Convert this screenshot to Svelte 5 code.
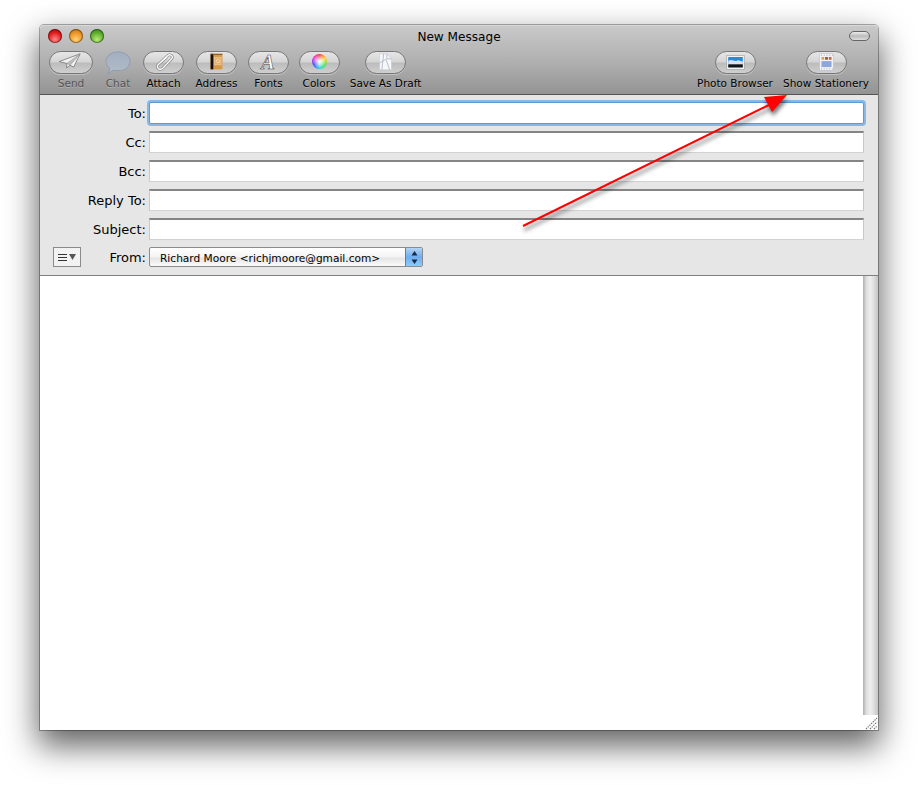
<script>
  const left = [
    { id: 'send', label: 'Send', w: 44, off: true },
    { id: 'chat', label: 'Chat', w: 50, off: true },
    { id: 'attach', label: 'Attach', w: 41 },
    { id: 'address', label: 'Address', w: 65 },
    { id: 'fonts', label: 'Fonts', w: 39 },
    { id: 'colors', label: 'Colors', w: 62 },
    { id: 'draft', label: 'Save As Draft', w: 71 }
  ];
  const right = [
    { id: 'photo', label: 'Photo Browser', w: 78 },
    { id: 'stationery', label: 'Show Stationery', w: 88 }
  ];
  const fields = [
    { label: 'To:', focus: true },
    { label: 'Cc:' },
    { label: 'Bcc:' },
    { label: 'Reply To:' },
    { label: 'Subject:' }
  ];
  const dotsX = [2, 5, 8, 11, 14];
</script>

{#snippet icon(id)}
  {#if id === 'send'}
    <svg class="ico" viewBox="0 0 44 23"><path d="M32 2 L9 10.5 L17.5 12.5 L17 17.5 L21 14.5 L25 16.5 Z" fill="#f1f1f1" stroke="#777" stroke-width=".9" stroke-linejoin="round"/><path d="M32 2 L17.5 12.5 L21 14.5 Z" fill="#bdbdbd" stroke="#8a8a8a" stroke-width=".5"/></svg>
  {:else if id === 'attach'}
    <svg class="ico" viewBox="0 0 41 23"><path d="M16 12.5 L25 4 C27.500 1.500 32 4.500 29.500 7.500 L20 17.500 C17 20.500 12 18 14.500 14 L24 6" fill="none" stroke="#777" stroke-width="2.800"/><path d="M16 12.5 L25 4 C27.500 1.500 32 4.500 29.500 7.500 L20 17.500 C17 20.500 12 18 14.500 14 L24 6" fill="none" stroke="#f8f8f8" stroke-width="1.600"/></svg>
  {:else if id === 'address'}
    <svg class="ico" viewBox="0 0 41 23"><rect x="14" y="2" width="13" height="17" fill="#d89a45"/><rect x="14" y="2" width="3" height="17" fill="#17100a"/><rect x="14" y="2" width="13" height="1" fill="#7a4a1c"/><rect x="18.500" y="6" width="7" height="8" fill="#e6b070" stroke="#f0cfa0" stroke-width=".7"/><circle cx="22" cy="10" r="1.800" fill="none" stroke="#fbe6c8" stroke-width=".7"/></svg>
  {:else if id === 'fonts'}
    <svg class="ico" viewBox="0 0 41 23"><text x="20" y="18.500" class="bigA">A</text></svg>
  {:else if id === 'colors'}
    <div class="wheel"></div>
  {:else if id === 'draft'}
    <svg class="ico" viewBox="0 0 41 23"><path d="M14 2 H22 L27 7.500 V19.500 H14 Z" fill="#f5f7fb" stroke="#c0c3cc" stroke-width=".5"/><path d="M22 2 V7.500 H27 M14 12 L21 8 L25 19.500 M18.500 2 L16.500 19.500" fill="none" stroke="#9aa2b2" stroke-width=".7"/></svg>
  {:else if id === 'photo'}
    <svg class="ico" viewBox="0 0 41 23"><rect x="11" y="4" width="19" height="15" fill="#f4f4f4" stroke="#8a8a8a" stroke-width=".5"/><rect x="12.500" y="5.500" width="16" height="8" fill="#1f8ce0"/><path d="M12.500 10 C16 7 19 11 22 9.500 C25 8 26 11 28.500 10 V14 H12.500 Z" fill="#e6dde2"/><rect x="12.500" y="13.500" width="16" height="3.500" fill="#10131a"/></svg>
  {:else if id === 'stationery'}
    <svg class="ico" viewBox="0 0 41 23"><g transform="translate(13 2)"><rect x="0" y="0" width="15" height="18" fill="#f1f2f6" stroke="#b8bac2" stroke-width=".5"/>{#each dotsX as x}<rect x={x - 0.5} y="1" width="1" height="1" fill="#9aa0b0"/><rect x={x - 0.5} y="16" width="1" height="1" fill="#9aa0b0"/>{/each}<rect x="2" y="3.500" width="3" height="3" fill="#e0a050"/><rect x="6" y="3.500" width="3" height="3" fill="#8a5a3a"/><rect x="10" y="3.500" width="3" height="3" fill="#c0683c"/><rect x="2" y="8" width="11" height="6.500" fill="#8fa6dc"/></g></svg>
  {/if}
{/snippet}

{#snippet tool(item)}
  <div class="tool" class:off={item.off} style="width:{item.w}px">
    {#if item.id === 'chat'}
      <svg class="bubble" viewBox="0 0 28 24">
        <defs><linearGradient id="bub" x1="0" y1="0" x2="0" y2="1"><stop offset="0" stop-color="#a2afc0"/><stop offset="1" stop-color="#b2bcc9"/></linearGradient></defs>
        <path d="M14 1 C21 1 26.500 5 26.500 11 C26.500 17 21 20.500 14 20.500 C12 20.500 10.500 20.500 9 20 L4 23.500 L5.500 18 C3 16 1.500 13.500 1.500 11 C1.500 5 7 1 14 1 Z" fill="url(#bub)" stroke="#8d9bb0" stroke-width="1"/>
      </svg>
    {:else}
      <div class="pill" class:wide={item.id === 'send'}>
        {@render icon(item.id)}
      </div>
    {/if}
    <span>{item.label}</span>
  </div>
{/snippet}

<div class="page">
  <div class="window">
    <header class="bar">
      <div class="titleline">
        <div class="lights">
          <i class="light red"></i><i class="light amber"></i><i class="light green"></i>
        </div>
        <h1>New Message</h1>
        <i class="capsule"></i>
      </div>
      <div class="tools">
        <div class="group">
          {#each left as item}{@render tool(item)}{/each}
        </div>
        <div class="group end">
          {#each right as item}{@render tool(item)}{/each}
        </div>
      </div>
    </header>

    <section class="head">
      {#each fields as f}
        <div class="row">
          <label for={f.label}>{f.label}</label>
          <div class="field" class:focus={f.focus} id={f.label}></div>
        </div>
      {/each}
      <div class="fromrow">
        <button class="menu">
          <svg viewBox="0 0 9 7" width="9" height="7"><path d="M0 .5H9M0 3.500H9M0 6.500H9" stroke="#333" stroke-width="1"/></svg>
          <svg viewBox="0 0 7 6" width="7" height="6"><path d="M0 0H7L3.500 6Z" fill="#555"/></svg>
        </button>
        <span class="fromlabel">From:</span>
        <div class="select">
          <span class="val">Richard Moore &lt;richjmoore@gmail.com&gt;</span>
          <div class="step">
            <svg viewBox="0 0 7 13" width="7" height="13"><path d="M3.500 0L6.500 4.500H.5ZM3.500 13L.5 8.500H6.500Z" fill="#1a2a44"/></svg>
          </div>
        </div>
      </div>
    </section>

    <main class="body">
      <div class="text"></div>
      <div class="scroll">
        <div class="track"></div>
        <div class="grip">
          <svg viewBox="0 0 15 15" width="15" height="15"><path d="M3 14L14 3M7 14L14 7M11 14L14 11" stroke="#777" stroke-width="1.2" stroke-dasharray="1.4 1"/></svg>
        </div>
      </div>
    </main>
  </div>

  <svg class="arrow" viewBox="0 0 918 785" width="918" height="785">
    <path d="M523 226 L773 103" stroke="#f00" stroke-width="2" fill="none"/>
    <path d="M787 95 L764 97 L772 112 Z" fill="#f00"/>
  </svg>
</div>

<style>
  :global(body) { background: #fff; }
  .page {
    position: relative;
    width: 918px;
    height: 785px;
    padding: 25px 40px 55px 40px;
    box-sizing: border-box;
    overflow: hidden;
    font-family: "DejaVu Sans", sans-serif;
    color: #000;
  }
  .window {
    height: 100%;
    display: flex;
    flex-direction: column;
    border-radius: 4px 4px 0 0;
    box-shadow: 0 14px 32px 2px rgba(0, 0, 0, 0.62), 0 0 0 1px rgba(0, 0, 0, 0.3);
    background: #fff;
  }
  .bar {
    height: 70px;
    box-sizing: border-box;
    flex: none;
    border-radius: 4px 4px 0 0;
    background: linear-gradient(#c9c9c9, #acacac 60%, #939393);
    border-bottom: 1px solid #555;
    border-top: 1px solid #d8d8d8;
    display: flex;
    flex-direction: column;
  }
  .titleline {
    height: 25px;
    flex: none;
    display: flex;
    align-items: flex-start;
    padding: 3px 8px 0 8px;
    box-sizing: border-box;
    position: relative;
  }
  .lights { display: flex; gap: 7px; margin-right: auto; }
  .light {
    width: 14px;
    height: 14px;
    border-radius: 50%;
    box-shadow: inset 0 0 0 1px rgba(0, 0, 0, 0.4);
  }
  .red { background: radial-gradient(circle at 50% 75%, #ff8a8a, #e01a1a 55%, #9a0a0a); }
  .amber { background: radial-gradient(circle at 50% 75%, #ffd27a, #ec9420 55%, #a8620a); }
  .green { background: radial-gradient(circle at 50% 75%, #b8ec78, #5cac2c 55%, #2f7a10); }
  h1 {
    position: absolute;
    left: 0;
    right: 0;
    top: 1px;
    margin: 0;
    text-align: center;
    font-size: 12.1px;
    font-weight: 400;
    line-height: 20px;
  }
  .capsule {
    width: 19px;
    height: 8px;
    margin-left: auto;
    margin-top: 2px;
    border-radius: 5px;
    border: 1px solid #666;
    background: linear-gradient(#eee, #bbb 50%, #ddd);
  }
  .tools {
    display: flex;
    justify-content: space-between;
    padding: 0 8px 0 9px;
  }
  .group { display: flex; }
  .end { gap: 8px; }
  .tool {
    display: flex;
    flex-direction: column;
    align-items: center;
    flex: none;
  }
  .tool span {
    font-size: 10.5px;
    line-height: 13px;
    margin-top: 3px;
    white-space: nowrap;
    text-shadow: 0 1px 0 rgba(255, 255, 255, 0.25);
  }
  .off span { color: #555; }
  .pill {
    width: 41px;
    height: 23px;
    box-sizing: border-box;
    border-radius: 12px;
    border: 1px solid #777;
    background: linear-gradient(#e6e6e6, #d4d4d4 48%, #bcbcbc 52%, #cfcfcf);
    box-shadow: 0 1px 0 rgba(255, 255, 255, 0.3);
    display: flex;
    align-items: center;
    justify-content: center;
  }
  .pill.wide { width: 44px; }
  .ico { width: 100%; height: 100%; display: block; overflow: visible; }
  .bubble { width: 28px; height: 23px; display: block; }
  .bigA { font-size: 22px; font-style: italic; fill: #fff; stroke: #444; stroke-width: 0.6px; text-anchor: middle; font-family: "Liberation Serif", serif; font-weight: 700; }
  .wheel {
    width: 15px;
    height: 15px;
    border-radius: 50%;
    margin-bottom: 2px;
    background:
      radial-gradient(circle, #fff 0, rgba(255, 255, 255, 0.7) 25%, rgba(255, 255, 255, 0) 70%),
      conic-gradient(#ff3030, #ffd020, #40e040, #20d0e0, #3040ff, #e030e0, #ff3030);
  }
  .head {
    flex: none;
    height: 181px;
    box-sizing: border-box;
    background: #e6e6e6;
    border-bottom: 1px solid #7f7f7f;
    padding: 7px 14px 0 0;
    display: flex;
    flex-direction: column;
    gap: 7px;
  }
  .row { display: flex; align-items: center; height: 22px; }
  .row label, .fromlabel {
    width: 106px;
    flex: none;
    text-align: right;
    font-size: 13px;
    margin-right: 3px;
  }
  .field {
    flex: 1;
    height: 22px;
    box-sizing: border-box;
    background: #fff;
    border-top: 2px solid #858585;
    border-left: 1px solid #c8c8c8;
    border-right: 1px solid #c8c8c8;
    border-bottom: 1px solid #d2d2d2;
  }
  .field.focus {
    border: 1px solid #5c9ad8;
    border-radius: 2px;
    box-shadow: 0 0 0 2px #8bb8e2;
  }
  .fromrow { display: flex; align-items: center; height: 20px; }
  .menu {
    width: 28px;
    height: 20px;
    margin-left: 13px;
    padding: 0;
    box-sizing: border-box;
    border: 1px solid #8a8a8a;
    background: #f2f2f2;
    display: flex;
    align-items: center;
    justify-content: center;
    gap: 2px;
    flex: none;
  }
  .fromlabel { width: 65px; }
  .select {
    width: 274px;
    height: 20px;
    box-sizing: border-box;
    border: 1px solid #8c8c8c;
    border-radius: 2px;
    background: linear-gradient(#fff, #f4f4f4 50%, #e4e4e4 55%, #fafafa);
    display: flex;
    align-items: center;
    justify-content: space-between;
  }
  .val { font-size: 10.6px; padding: 1px 0 0 10px; white-space: nowrap; }
  .step {
    width: 16px;
    height: 18px;
    background: linear-gradient(#b4d4f4, #6eaef0 50%, #8ecafc);
    border-left: 1px solid #6a7d96;
    display: flex;
    align-items: center;
    justify-content: center;
  }
  .body {
    flex: 1;
    min-height: 0;
    display: flex;
    background: #fff;
  }
  .text { flex: 1; }
  .scroll {
    width: 15px;
    flex: none;
    display: flex;
    flex-direction: column;
  }
  .track {
    flex: 1;
    background: linear-gradient(90deg, #b0b0b0, #e2e2e2 25%, #eeeeee 50%, #dcdcdc 75%, #c4c4c4);
  }
  .grip { height: 15px; background: #fff; }
  .grip svg { display: block; }
  .arrow {
    position: absolute;
    top: 0;
    left: 0;
    pointer-events: none;
    filter: drop-shadow(1px 4px 2px rgba(0, 0, 0, 0.55));
  }
</style>
